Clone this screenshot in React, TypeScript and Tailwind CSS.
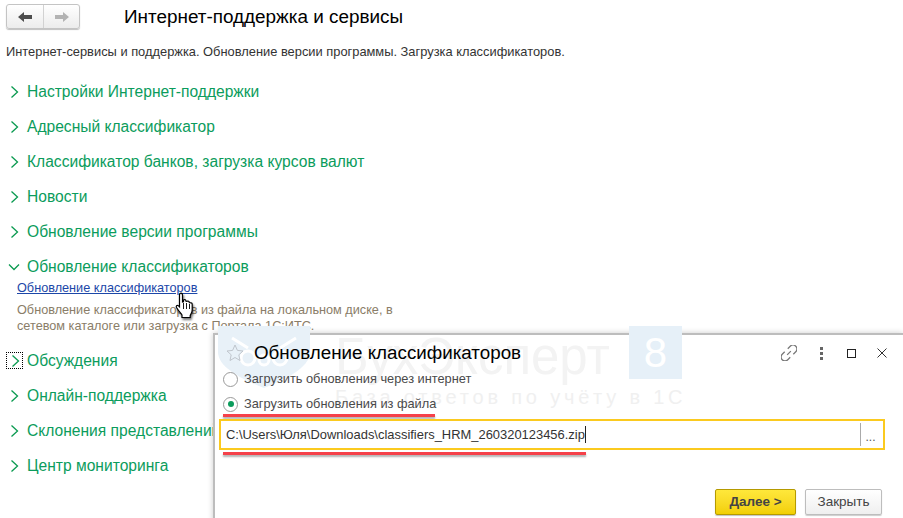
import React from "react";

const Chevron = ({ open }: { open?: boolean }) => (
  <svg width="12" height="12" viewBox="0 0 12 12" fill="none" stroke="#0a9a50" strokeWidth="1.3" className="shrink-0">
    {open ? <path d="M1 3.500 L6 8.500 L11 3.500" /> : <path d="M3.500 0.500 L9.500 6 L3.500 11.500" />}
  </svg>
);

const Row = ({ text, open, focus }: { text: string; open?: boolean; focus?: boolean }) => (
  <div className="flex h-[35px] items-center pl-[8px]">
    <span className={focus ? "-ml-[2px] mr-[4px] flex h-[17px] w-[17px] items-center justify-center border border-dotted border-black" : "mr-[7px] flex w-[12px] justify-start"}>
      <Chevron open={open} />
    </span>
    <span className="text-[15.6px] leading-[20px] text-[#0b9c5c]">{text}</span>
  </div>
);

const Hand = () => (
  <svg width="22" height="28" viewBox="0 0 22 28" className="absolute left-[174px] top-[292px] drop-shadow-[1px_2px_1px_rgba(0,0,0,0.55)]">
    <path d="M6 1.500c1.200-.8 2.500 0 2.500 1.500v7l1-.3V8c1.400-.8 2.400 0 2.500 1.200l1 .1c1.200-.6 2.300.1 2.300 1.300l.9.2c1.200-.3 2 .4 2 1.700v5.500c0 2.500-1.200 4-2 5.500v2H8v-2.500c-1.500-2-4-5-5.500-7.500-.8-1.500.5-2.800 1.800-1.800l1.200 1.200V3c0-.6.1-1.100.5-1.500z" fill="#fff" stroke="#000" strokeWidth="1.200" />
    <path d="M9.500 11v6M12.500 11v6M15.500 12v5" stroke="#000" strokeWidth="0.900" />
  </svg>
);

const Radio = ({ on }: { on?: boolean }) => (
  <span className="relative flex h-[15px] w-[15px] shrink-0 items-center justify-center rounded-full border border-[#9a9a9a]">
    {on && <span className="h-[6px] w-[6px] rounded-full bg-[#0b9c5c]" />}
  </span>
);

const Watermark = () => (
  <div className="pointer-events-none absolute left-0 top-0 z-10 h-[518px] w-[903px] overflow-hidden font-['Liberation_Sans',sans-serif]">
    <svg width="92" height="62" viewBox="0 0 92 62" className="absolute left-[218px] top-[326px]">
      <path d="M0 0H92V26C92 42 66 54 46 62C26 54 0 42 0 26Z" fill="#e8f1f8" />
      <path d="M14 12L30 22M78 12L62 22" stroke="#fff" strokeWidth="3" />
      <circle cx="30" cy="32" r="7" fill="none" stroke="#fff" strokeWidth="3" />
      <circle cx="46" cy="34" r="5" fill="none" stroke="#fff" strokeWidth="3" />
      <circle cx="62" cy="32" r="7" fill="none" stroke="#fff" strokeWidth="3" />
    </svg>
    <span className="absolute left-[335px] top-[329px] text-[51px] leading-[56px] text-[#f3f3f3]">БухЭксперт</span>
    <span className="absolute left-[629px] top-[326px] flex h-[53px] w-[53px] items-center justify-center bg-[#e6f0f8] text-[42px] leading-none text-white">8</span>
    <span className="absolute left-[335px] top-[385px] text-[20px] leading-[24px] tracking-[3.8px] text-[#f0f0f0]">База ответов по учёту в 1С</span>
  </div>
);

export default function App() {
  return (
    <div className="relative h-[518px] w-[903px] overflow-hidden bg-white font-['Liberation_Sans',sans-serif]">
      <div className="flex h-[30px] items-center pl-[6px] pt-[3px]">
        <div className="flex h-[25px] w-[74px] rounded-[3px] border border-[#c4c4c4] bg-gradient-to-b from-white to-[#ececec] shadow-[0_1px_1px_rgba(0,0,0,0.25)]">
          <div className="flex w-[37px] items-center justify-center border-r border-[#d2d2d2]">
            <svg width="14" height="10" viewBox="0 0 14 10"><path d="M0 5L6 0V3H14V7H6V10Z" fill="#4d4d4d" /></svg>
          </div>
          <div className="flex flex-1 items-center justify-center">
            <svg width="14" height="10" viewBox="0 0 14 10"><path d="M14 5L8 0V3H0V7H8V10Z" fill="#b3b3b3" /></svg>
          </div>
        </div>
        <h1 className="ml-[44px] text-[18.9px] font-normal leading-[24px] text-black">Интернет-поддержка и сервисы</h1>
      </div>

      <p className="pl-[6px] pt-[14px] text-[12.87px] leading-[16px] text-[#333]">
        Интернет-сервисы и поддержка. Обновление версии программы. Загрузка классификаторов.
      </p>

      <div className="pt-[14px]">
        <Row text="Настройки Интернет-поддержки" />
        <Row text="Адресный классификатор" />
        <Row text="Классификатор банков, загрузка курсов валют" />
        <Row text="Новости" />
        <Row text="Обновление версии программы" />
        <Row text="Обновление классификаторов" open />
        <div className="pl-[17px]">
          <a className="-mt-[4px] block text-[12.7px] leading-[16px] text-[#1c47a8] underline">Обновление классификаторов</a>
          <p className="mt-[6px] w-[390px] text-[12.7px] leading-[16px] text-[#8a7d68]">
            Обновление классификаторов из файла на локальном диске, в сетевом каталоге или загрузка с Портала 1С:ИТС.
          </p>
        </div>
        <div className="pt-[9px]">
          <Row text="Обсуждения" focus />
          <Row text="Онлайн-поддержка" />
          <Row text="Склонения представлений" />
          <Row text="Центр мониторинга" />
        </div>
      </div>

      <Hand />

      <div className="absolute left-[213px] top-[333px] flex h-[190px] w-[690px] flex-col border-l-2 border-t-2 border-[#bdbdbd] bg-white shadow-[0_0_6px_rgba(0,0,0,0.2)]">
        <div className="relative z-20 flex h-[36px] items-center pl-[10px] pr-[16px]">
          <svg width="20" height="20" viewBox="0 0 20 20" fill="none" stroke="#bfc5cc" strokeWidth="1"><path d="M10 2l2.400 5.400 5.600.6-4.200 3.800 1.200 5.700-5-3-5 3 1.200-5.700L2 8l5.600-.6z" /></svg>
          <span className="ml-[9px] text-[18.8px] leading-[24px] text-black">Обновление классификаторов</span>
          <div className="ml-auto flex items-center">
            <svg width="16" height="16" viewBox="1.500 1.500 13 13" fill="none" stroke="#777" strokeWidth="1"><path d="M6.500 9.500l3-3M7 4.500l2-2a3 3 0 0 1 4.500 4.500l-2 2M9 11.500l-2 2A3 3 0 0 1 2.500 9l2-2" /></svg>
            <span className="ml-[23px] flex flex-col gap-[2px]">
              <i className="block h-[3px] w-[3px] bg-[#666]" /><i className="block h-[3px] w-[3px] bg-[#666]" /><i className="block h-[3px] w-[3px] bg-[#666]" />
            </span>
            <span className="ml-[24px] block h-[9px] w-[9px] border border-[#222]" />
            <svg width="10" height="10" viewBox="0 0 10 10" className="ml-[21px]" stroke="#333" strokeWidth="1"><path d="M0.500 0.500L9.500 9.500M9.500 0.500L0.500 9.500" /></svg>
          </div>
        </div>
        <div className="relative z-20 flex h-[16px] items-center gap-[6px] pl-[8px]">
          <Radio />
          <span className="text-[12.8px] leading-[16px] text-[#4a4a4a]">Загрузить обновления через интернет</span>
        </div>
        <div className="relative z-20 mt-[9px] flex h-[16px] items-center gap-[6px] pl-[8px]">
          <Radio on />
          <span className="text-[12.8px] leading-[16px] text-[#4a4a4a]">Загрузить обновления из файла</span>
        </div>
        <div className="relative z-20 ml-[8px] mt-[2px] h-[3px] w-[212px] bg-[#f5414a] shadow-[0_2px_2px_rgba(0,0,0,0.3)]" />
        <div className="relative z-20 ml-[4px] mt-[2px] flex h-[31px] w-[666px] items-center border-2 border-[#fbca1f] pl-[5px]">
          <span className="text-[12.93px] leading-[18px] text-[#333]">C:\Users\Юля\Downloads\classifiers_HRM_260320123456.zip</span>
          <span className="h-[17px] w-px bg-[#222]" />
          <span className="ml-auto flex h-[23px] w-[23px] items-center justify-center border-l border-[#aaa] pr-[3px] pt-[4px] text-[12px] leading-none text-[#555]">...</span>
        </div>
        <div className="relative z-20 ml-[8px] mt-[2px] h-[3px] w-[363px] bg-[#f5414a] shadow-[0_2px_2px_rgba(0,0,0,0.3)]" />
        <div className="relative z-20 mr-[21px] mt-[34px] flex justify-end gap-[9px]">
          <button className="flex h-[26px] w-[81px] items-center justify-center rounded-[2px] border border-[#b59a00] bg-gradient-to-b from-[#ffe83a] to-[#f2cf00] text-[13.5px] font-bold leading-none text-[#444] shadow-[0_1px_1px_rgba(0,0,0,0.25)]">Далее &gt;</button>
          <button className="flex h-[26px] w-[77px] items-center justify-center rounded-[2px] border border-[#bdbdbd] bg-gradient-to-b from-white to-[#efefef] text-[13.5px] leading-none text-[#444] shadow-[0_1px_1px_rgba(0,0,0,0.2)]">Закрыть</button>
        </div>
      </div>

      <Watermark />
    </div>
  );
}
